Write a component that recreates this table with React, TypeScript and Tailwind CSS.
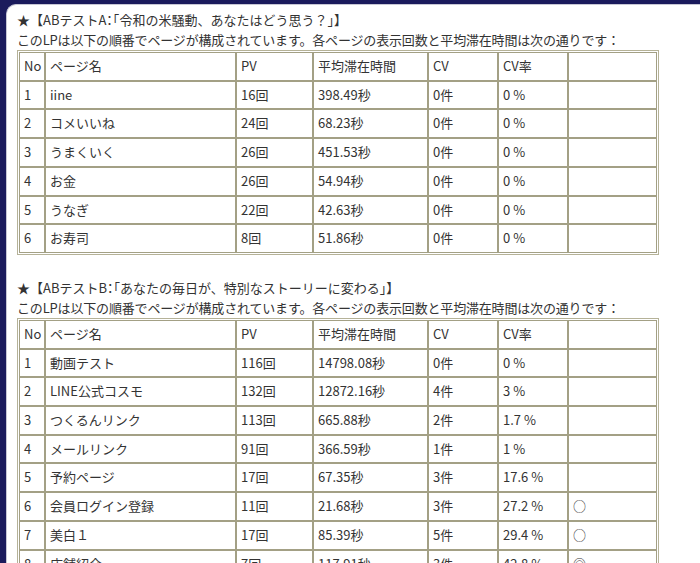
import React from "react";

type Row = [string, string, string, string, string, string, string];

const tableA: Row[] = [
  ["1", "iine", "16回", "398.49秒", "0件", "0 %", ""],
  ["2", "コメいいね", "24回", "68.23秒", "0件", "0 %", ""],
  ["3", "うまくいく", "26回", "451.53秒", "0件", "0 %", ""],
  ["4", "お金", "26回", "54.94秒", "0件", "0 %", ""],
  ["5", "うなぎ", "22回", "42.63秒", "0件", "0 %", ""],
  ["6", "お寿司", "8回", "51.86秒", "0件", "0 %", ""],
];

const tableB: Row[] = [
  ["1", "動画テスト", "116回", "14798.08秒", "0件", "0 %", ""],
  ["2", "LINE公式コスモ", "132回", "12872.16秒", "4件", "3 %", ""],
  ["3", "つくるんリンク", "113回", "665.88秒", "2件", "1.7 %", ""],
  ["4", "メールリンク", "91回", "366.59秒", "1件", "1 %", ""],
  ["5", "予約ページ", "17回", "67.35秒", "3件", "17.6 %", ""],
  ["6", "会員ログイン登録", "11回", "21.68秒", "3件", "27.2 %", "○"],
  ["7", "美白１", "17回", "85.39秒", "5件", "29.4 %", "○"],
  ["8", "店舗紹介", "7回", "117.91秒", "3件", "42.8 %", "◎"],
];

const header = ["No", "ページ名", "PV", "平均滞在時間", "CV", "CV率", ""];

function Halt({ children }: { children: React.ReactNode }) {
  return <span className="[font-feature-settings:'halt']">{children}</span>;
}

function DataTable({ rows }: { rows: Row[] }) {
  return (
    <table className="table-fixed border-separate border-spacing-0 border border-[#b5b298] p-px w-[642px]">
      <colgroup>
        <col className="w-[26px]" />
        <col className="w-[191px]" />
        <col className="w-[77px]" />
        <col className="w-[115px]" />
        <col className="w-[70px]" />
        <col className="w-[70px]" />
        <col className="w-[89px]" />
      </colgroup>
      <thead>
        <tr>
          {header.map((h, i) => (
            <th
              key={i}
              className="border border-[#a3a085] px-1 py-[4px] text-left font-normal leading-[18.7px] whitespace-nowrap"
            >
              {h}
            </th>
          ))}
        </tr>
      </thead>
      <tbody>
        {rows.map((r, ri) => (
          <tr key={ri}>
            {r.map((c, ci) => (
              <td
                key={ci}
                className="border border-[#a3a085] px-1 py-[4px] text-left leading-[18.7px] whitespace-nowrap"
              >
                {c}
              </td>
            ))}
          </tr>
        ))}
      </tbody>
    </table>
  );
}

export default function App() {
  return (
    <div className="h-[563px] w-[700px] overflow-hidden bg-[#1b1b5c] pl-[6px] pt-[4px]">
      <div className="h-full rounded-tl-[10px] border-l border-t border-[#c7c7d4] bg-white pl-[10px] pt-[5px] text-[13px] text-[#333] font-['Noto_Sans_CJK_JP',sans-serif]">
        <div className="leading-[20px] whitespace-nowrap">
          ★【ABテストA<Halt>：「</Halt>令和の米騒動、あなたはどう思う？<Halt>」</Halt>】
        </div>
        <div className="leading-[20px] whitespace-nowrap tracking-[-0.17px]">
          このLPは以下の順番でページが構成されています。各ページの表示回数と平均滞在時間は次の通りです：
        </div>
        <DataTable rows={tableA} />

        <div className="mt-[23px] leading-[20px] whitespace-nowrap">
          ★【ABテストB<Halt>：「</Halt>あなたの毎日が、特別なストーリーに変わる<Halt>」</Halt>】
        </div>
        <div className="leading-[20px] whitespace-nowrap tracking-[-0.17px]">
          このLPは以下の順番でページが構成されています。各ページの表示回数と平均滞在時間は次の通りです：
        </div>
        <DataTable rows={tableB} />
      </div>
    </div>
  );
}
